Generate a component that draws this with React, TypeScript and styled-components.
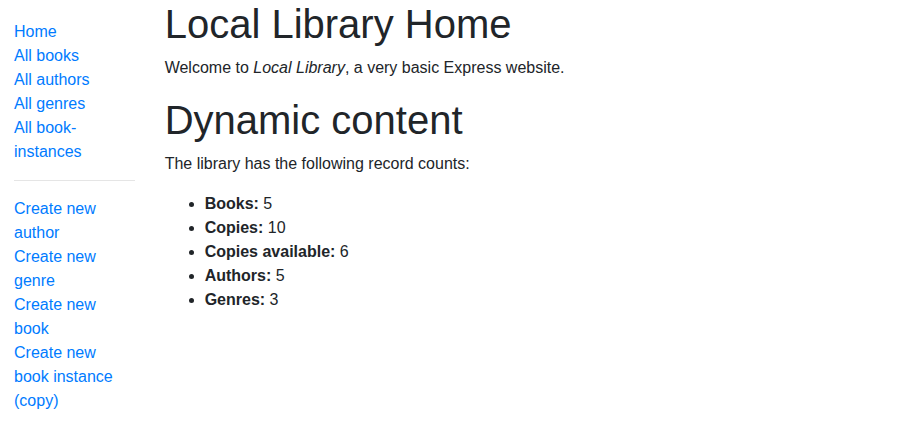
import styled, { createGlobalStyle } from 'styled-components';

const GlobalStyle = createGlobalStyle`
  *, *::before, *::after {
    box-sizing: border-box;
  }

  body {
    margin: 0;
    font-family: "Liberation Sans", Arial, Helvetica, sans-serif;
    font-size: 16px;
    line-height: 1.5;
    color: #212529;
    background-color: #fff;
  }
`;

const Page = styled.div`
  width: 100%;
  padding: 0 14px;
`;

const Row = styled.div`
  display: flex;
  margin: 0 -15px;
`;

const Sidebar = styled.div`
  flex: 0 0 16.666667%;
  max-width: 16.666667%;
  padding: 0 15px;
`;

const Main = styled.main`
  flex: 0 0 83.333333%;
  max-width: 83.333333%;
  padding: 0 15px;
`;

const SideNav = styled.ul`
  margin: 20px 0 0;
  padding: 0;
  list-style: none;
`;

const NavLink = styled.a`
  color: #007bff;
  text-decoration: none;
`;

const Divider = styled.hr`
  margin: 16px 0;
  border: 0;
  border-top: 1px solid rgba(0, 0, 0, 0.1);
`;

const Title = styled.h1`
  margin: 0 0 8px;
  font-size: 40px;
  font-weight: 500;
  line-height: 1.2;
`;

const Text = styled.p`
  margin: 0 0 16px;
`;

const Counts = styled.ul`
  margin: 0 0 16px;
  padding-left: 40px;
`;

const links = ['Home', 'All books', 'All authors', 'All genres', 'All book-instances'];
const createLinks = [
  'Create new author',
  'Create new genre',
  'Create new book',
  'Create new book instance (copy)',
];

const counts = [
  { label: 'Books:', value: 5 },
  { label: 'Copies:', value: 10 },
  { label: 'Copies available:', value: 6 },
  { label: 'Authors:', value: 5 },
  { label: 'Genres:', value: 3 },
];

export default function App() {
  return (
    <>
      <GlobalStyle />
      <Page>
        <Row>
          <Sidebar>
            <SideNav>
              {links.map((item) => (
                <li key={item}>
                  <NavLink href="#">{item}</NavLink>
                </li>
              ))}
              <li>
                <Divider />
              </li>
              {createLinks.map((item) => (
                <li key={item}>
                  <NavLink href="#">{item}</NavLink>
                </li>
              ))}
            </SideNav>
          </Sidebar>
          <Main>
            <Title>Local Library Home</Title>
            <Text>
              Welcome to <em>Local Library</em>, a very basic Express website.
            </Text>
            <Title>Dynamic content</Title>
            <Text>The library has the following record counts:</Text>
            <Counts>
              {counts.map((c) => (
                <li key={c.label}>
                  <strong>{c.label}</strong> {c.value}
                </li>
              ))}
            </Counts>
          </Main>
        </Row>
      </Page>
    </>
  );
}
